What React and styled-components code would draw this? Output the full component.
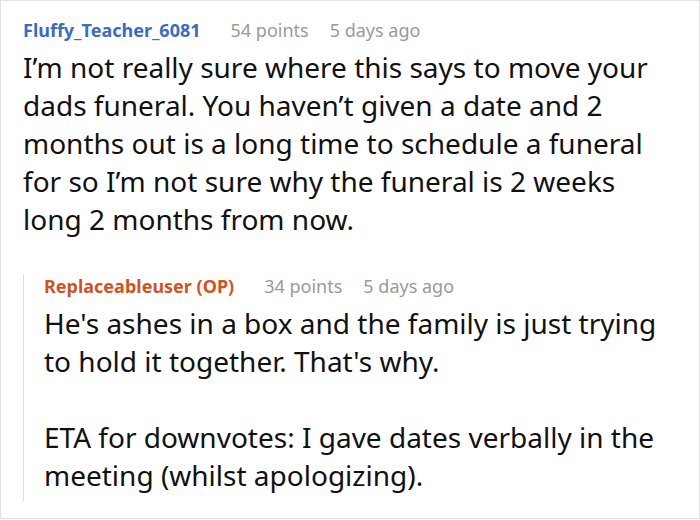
import React from "react";
import styled, { createGlobalStyle } from "styled-components";

const GlobalStyle = createGlobalStyle`
  html, body {
    margin: 0;
    padding: 0;
    background: #ffffff;
  }
  body {
    font-family: "Noto Sans", "Open Sans", sans-serif;
  }
`;

const Frame = styled.div`
  box-sizing: border-box;
  width: 700px;
  height: 519px;
  border: 1px solid #e2e2e2;
  background: #ffffff;
  padding: 17px 34px 0 22px;
  overflow: hidden;
`;

const Comment = styled.div`
  display: flex;
  flex-direction: column;
`;

const Meta = styled.div`
  display: flex;
  align-items: baseline;
  gap: 21px;
  height: 24px;
  line-height: 24px;
  font-size: 18px;
  margin-bottom: 6px;
  white-space: nowrap;
`;

const Author = styled.span`
  font-weight: 700;
  color: ${(p) => (p.$op ? "#d2521e" : "#3b6cbf")};
  margin-right: 9px;
`;

const Muted = styled.span`
  color: #9a9a9a;
`;

const Body = styled.div`
  color: #111111;
`;

const Para = styled.p`
  margin: 0;
  font-size: 28px;
  line-height: 38px;

  & + & {
    margin-top: 38px;
  }
`;

const Reply = styled.div`
  margin-top: 36px;
  border-left: 1px solid #dddddd;
  padding: 0 0 7px 20px;
  display: flex;
  flex-direction: column;
`;

const Item = ({ author, op, points, age, children }) => (
  <>
    <Meta>
      <Author $op={op}>{author}</Author>
      <Muted>{points} points</Muted>
      <Muted>{age}</Muted>
    </Meta>
    <Body>{children}</Body>
  </>
);

export default function App() {
  return (
    <>
      <GlobalStyle />
      <Frame>
        <Comment>
          <Item author="Fluffy_Teacher_6081" points={54} age="5 days ago">
            <Para>
              I’m not really sure where this says to move your dads funeral.
              You haven’t given a date and 2 months out is a long time to
              schedule a funeral for so I’m not sure why the funeral is 2
              weeks long 2 months from now.
            </Para>
          </Item>
          <Reply>
            <Item author="Replaceableuser (OP)" op points={34} age="5 days ago">
              <Para>
                He's ashes in a box and the family is just trying to hold it
                together. That's why.
              </Para>
              <Para>
                ETA for downvotes: I gave dates verbally in the meeting
                (whilst apologizing).
              </Para>
            </Item>
          </Reply>
        </Comment>
      </Frame>
    </>
  );
}
